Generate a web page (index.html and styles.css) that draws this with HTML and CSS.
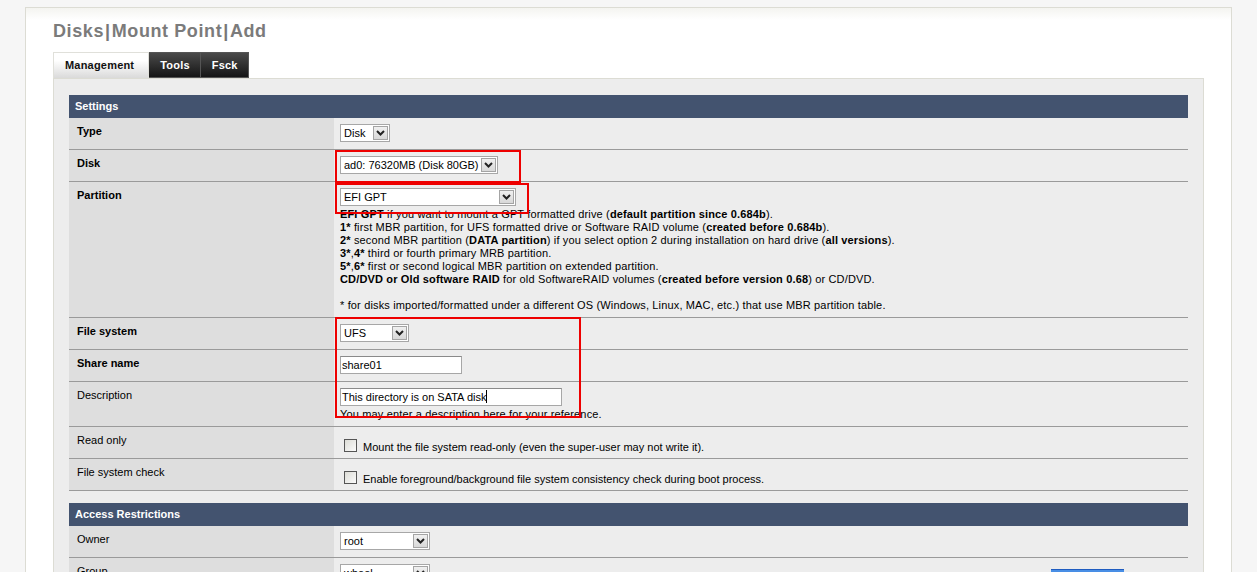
FILE: index.html
```html
<!DOCTYPE html>
<html lang="en">
<head>
  <meta charset="UTF-8" />
  <title>Disks | Mount Point | Add</title>
  <link rel="stylesheet" href="styles.css">
</head>
<body>
  <div class="page">
    <h1 class="page-title">Disks<span class="sep">|</span>Mount Point<span class="sep">|</span>Add</h1>

    <ul class="tabs">
      <li class="tab active">Management</li>
      <li class="tab">Tools</li>
      <li class="tab">Fsck</li>
    </ul>

    <div class="tab-content">
      <table class="form-table">
        <tr><td colspan="2" class="section-title">Settings</td></tr>
        <tr>
          <td class="label req">Type</td>
          <td class="value">
            <span class="select w-type">Disk<span class="arrow"><svg width="9" height="6" viewBox="0 0 9 6"><path d="M1 1l3.5 3.5L8 1" fill="none" stroke="#222" stroke-width="2"/></svg></span></span>
          </td>
        </tr>
        <tr>
          <td class="label req">Disk</td>
          <td class="value">
            <span class="select w-disk">ad0: 76320MB (Disk 80GB)<span class="arrow"><svg width="9" height="6" viewBox="0 0 9 6"><path d="M1 1l3.5 3.5L8 1" fill="none" stroke="#222" stroke-width="2"/></svg></span></span>
          </td>
        </tr>
        <tr>
          <td class="label req">Partition</td>
          <td class="value with-help">
            <span class="select w-part">EFI GPT<span class="arrow"><svg width="9" height="6" viewBox="0 0 9 6"><path d="M1 1l3.5 3.5L8 1" fill="none" stroke="#222" stroke-width="2"/></svg></span></span>
            <div class="help">
              <b>EFI GPT</b> if you want to mount a GPT formatted drive (<b>default partition since 0.684b</b>).<br>
              <b>1*</b> first MBR partition, for UFS formatted drive or Software RAID volume (<b>created before 0.684b</b>).<br>
              <b>2*</b> second MBR partition (<b>DATA partition</b>) if you select option 2 during installation on hard drive (<b>all versions</b>).<br>
              <b>3*</b>,<b>4*</b> third or fourth primary MRB partition.<br>
              <b>5*</b>,<b>6*</b> first or second logical MBR partition on extended partition.<br>
              <b>CD/DVD or Old software RAID</b> for old SoftwareRAID volumes (<b>created before version 0.68</b>) or CD/DVD.<br>
              <br>
              * for disks imported/formatted under a different OS (Windows, Linux, MAC, etc.) that use MBR partition table.
            </div>
          </td>
        </tr>
        <tr>
          <td class="label req">File system</td>
          <td class="value">
            <span class="select w-fs">UFS<span class="arrow"><svg width="9" height="6" viewBox="0 0 9 6"><path d="M1 1l3.5 3.5L8 1" fill="none" stroke="#222" stroke-width="2"/></svg></span></span>
          </td>
        </tr>
        <tr>
          <td class="label req">Share name</td>
          <td class="value"><span class="text-input w-share">share01</span></td>
        </tr>
        <tr>
          <td class="label">Description</td>
          <td class="value with-help">
            <span class="text-input w-desc">This directory is on SATA disk<span class="caret"></span></span>
            <div class="help">You may enter a description here for your reference.</div>
          </td>
        </tr>
        <tr>
          <td class="label">Read only</td>
          <td class="value check-cell"><span class="checkbox"></span>Mount the file system read-only (even the super-user may not write it).</td>
        </tr>
        <tr>
          <td class="label">File system check</td>
          <td class="value check-cell"><span class="checkbox"></span>Enable foreground/background file system consistency check during boot process.</td>
        </tr>
      </table>

      <table class="form-table">
        <tr><td colspan="2" class="section-title">Access Restrictions</td></tr>
        <tr>
          <td class="label">Owner</td>
          <td class="value">
            <span class="select w-owner">root<span class="arrow"><svg width="9" height="6" viewBox="0 0 9 6"><path d="M1 1l3.5 3.5L8 1" fill="none" stroke="#222" stroke-width="2"/></svg></span></span>
          </td>
        </tr>
        <tr>
          <td class="label">Group</td>
          <td class="value group-cell">
            <span class="select w-owner">wheel<span class="arrow"><svg width="9" height="6" viewBox="0 0 9 6"><path d="M1 1l3.5 3.5L8 1" fill="none" stroke="#222" stroke-width="2"/></svg></span></span>
            <span class="blue-btn">Save</span>
          </td>
        </tr>
      </table>
    </div>
  </div>

  <!-- annotation boxes drawn over the form -->
  <div class="mark mark-disk"></div>
  <div class="mark mark-part"></div>
  <div class="mark mark-fs"></div>
</body>
</html>
```

FILE: styles.css
```css
* {
  box-sizing: border-box;
}

body {
  margin: 0;
  background: #f6f6f6;
  font-family: "Liberation Sans", Arial, sans-serif;
  font-size: 11px;
  color: #000;
  overflow: hidden;
  height: 572px;
}

.page {
  margin: 7px 25px 0 25px;
  width: 1207px;
  min-height: 600px;
  border: 1px solid #dcdcd4;
  background: linear-gradient(#f4f4f0, #fff 12px);
  padding: 0 26px 0 27px;
}

.page-title {
  margin: 0;
  padding-top: 12px;
  height: 44px;
  font-size: 18px;
  line-height: 22px;
  font-weight: bold;
  color: #7b7b7b;
  letter-spacing: 0.6px;
}

.page-title .sep {
  margin: 0 1px;
  color: #777;
}

.tabs {
  list-style: none;
  margin: 0;
  padding: 0;
  display: flex;
  height: 26px;
}

.tab {
  height: 26px;
  line-height: 24px;
  padding: 0 10px 0 11px;
  font-weight: bold;
  color: #fff;
  background: linear-gradient(#4a4a4a, #151515);
  border: 1px solid #555;
  border-left: none;
  letter-spacing: 0.2px;
}

.tab.active {
  color: #111;
  background: linear-gradient(#fff 30%, #dadada);
  border: 1px solid #e0e0da;
  border-bottom: none;
  padding: 0 14px 0 11px;
}

.tab-content {
  width: 1151px;
  border: 1px solid #dcdcd4;
  background: #ededed;
  padding: 16px 15px 40px 15px;
}

.form-table {
  width: 100%;
  border-collapse: collapse;
  margin-bottom: 12px;
}

.form-table td {
  padding: 0;
  vertical-align: top;
  border-bottom: 1px solid #9a9a9a;
}

.form-table .section-title {
  height: 23px;
  background: #43536f;
  color: #fff;
  font-weight: bold;
  padding: 5px 6px 0 6px;
  border-bottom: none;
}

.label {
  width: 265px;
  background: #dedede;
  padding: 7px 8px 0 8px !important;
  line-height: 13px;
}

.label.req {
  font-weight: bold;
}

.value {
  padding: 6px 6px 7px 6px !important;
  line-height: 13px;
}

.value.with-help {
  padding-bottom: 5px !important;
}

.select {
  display: inline-flex;
  align-items: center;
  height: 18px;
  border: 1px solid #a7a7a7;
  background: #fff;
  padding-left: 3px;
  vertical-align: top;
}

.select .arrow {
  margin-left: auto;
  margin-right: 1px;
  width: 15px;
  height: 14px;
  border: 1px solid #a4a4a4;
  background: linear-gradient(#f0f0f0, #d8d8d8);
  display: flex;
  align-items: center;
  justify-content: center;
}

.w-type { width: 50px; }
.w-disk { width: 158px; }
.w-part { width: 176px; }
.w-fs { width: 69px; }
.w-owner { width: 90px; }

.text-input {
  display: inline-block;
  height: 18px;
  line-height: 16px;
  border: 1px solid #a7a7a7;
  border-top-color: #8a8a8a;
  background: #fff;
  padding-left: 1px;
  vertical-align: top;
}

.w-share { width: 122px; }
.w-desc { width: 222px; }

.caret {
  display: inline-block;
  width: 1px;
  height: 13px;
  background: #000;
  vertical-align: -2px;
}

.help {
  margin-top: 2px;
  letter-spacing: 0.15px;
}

.check-cell {
  padding: 12px 6px 4px 10px !important;
}

.checkbox {
  display: inline-block;
  width: 13px;
  height: 13px;
  border: 1px solid #555;
  background: linear-gradient(135deg, #dcdcd6, #fbfbfb);
  margin-right: 6px;
  vertical-align: -1px;
}

.group-cell {
  display: flex;
  height: 32px;
}

.blue-btn {
  margin-left: auto;
  margin-right: 58px;
  margin-top: 5px;
  width: 73px;
  height: 22px;
  background: linear-gradient(#4a90e6, #2c6ed5);
  border-top: 1px solid #1f5cc0;
  color: #fff;
  text-align: center;
  line-height: 20px;
}

.mark {
  position: absolute;
  border: 2px solid #ee0000;
}

.mark-disk {
  left: 335px;
  top: 150px;
  width: 186px;
  height: 33px;
}

.mark-part {
  left: 335px;
  top: 183px;
  width: 194px;
  height: 31px;
}

.mark-fs {
  left: 335px;
  top: 317px;
  width: 246px;
  height: 101px;
}
```
